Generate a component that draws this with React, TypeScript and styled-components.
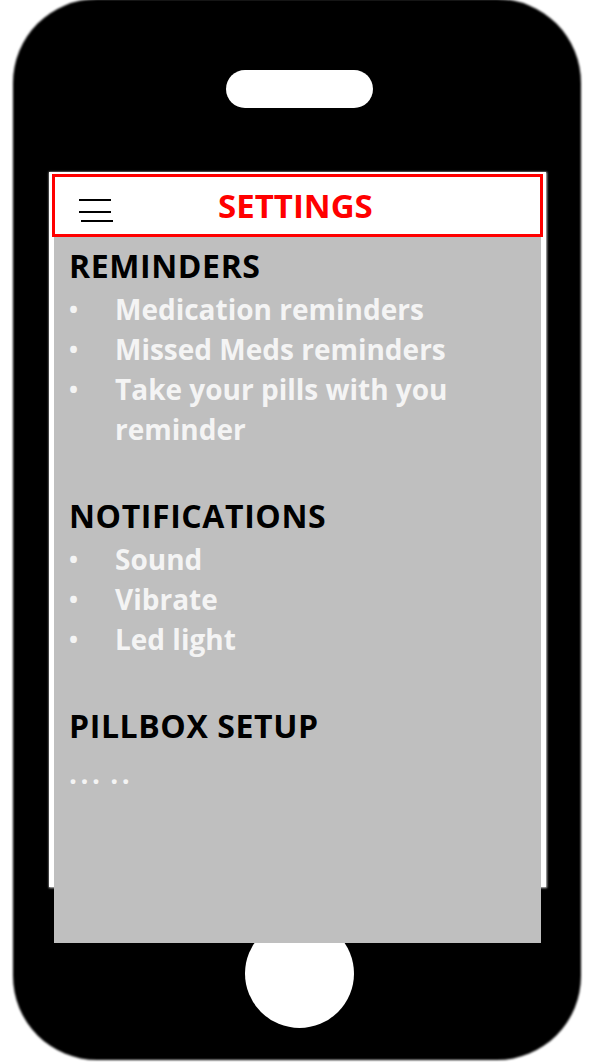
import React from "react";
import styled, { createGlobalStyle } from "styled-components";

const Global = createGlobalStyle`
  html, body { margin: 0; padding: 0; background: #ffffff; }
  body { width: 593px; height: 1062px; overflow: hidden; font-family: "Open Sans", "Liberation Sans", sans-serif; }
`;

const Page = styled.div`
  width: 593px;
  height: 1062px;
  display: flex;
  padding-left: 13px;
  box-sizing: border-box;
`;

const Phone = styled.div`
  position: relative;
  width: 568px;
  height: 1061px;
  margin-top: -1px;
  display: flex;
  flex-direction: column;
  align-items: center;
  isolation: isolate;
  &::before {
    content: "";
    position: absolute;
    inset: 0;
    background: #000;
    border-radius: 84px;
    filter: blur(1.2px);
    z-index: -1;
  }
`;

const Speaker = styled.div`
  width: 147px;
  height: 38px;
  margin-top: 71px;
  margin-left: 5px;
  border-radius: 19px;
  background: #fff;
  filter: blur(0.6px);
  flex-shrink: 0;
`;

const Screen = styled.div`
  position: relative;
  z-index: 1;
  width: 497px;
  height: 715px;
  margin-top: 64px;
  margin-left: 1px;
  background: #fff;
  display: flex;
  flex-direction: column;
  align-items: center;
  box-shadow: 0 0 2px 0.5px rgba(255, 255, 255, 0.8);
  flex-shrink: 0;
`;

const Header = styled.header`
  box-sizing: border-box;
  width: 491px;
  height: 63px;
  margin-top: 2px;
  border: 3px solid #ff0000;
  background: #fff;
  display: flex;
  align-items: center;
  flex-shrink: 0;
`;

const Burger = styled.div`
  display: flex;
  flex-direction: column;
  align-self: flex-start;
  margin-left: 24px;
  margin-top: 22px;
  width: 34px;
`;

const BurgerLine = styled.span<{ $shift?: number; $gap?: number }>`
  display: block;
  width: 32px;
  height: 2px;
  background: #000;
  margin-left: ${(p) => p.$shift ?? 0}px;
  margin-top: ${(p) => p.$gap ?? 0}px;
`;

const Title = styled.h1`
  margin: 0 0 0 105px;
  font-family: "Open Sans", "Liberation Sans", sans-serif;
  font-weight: 700;
  font-size: 33px;
  line-height: 40px;
  color: #ff0000;
`;

const Panel = styled.main`
  box-sizing: border-box;
  width: 487px;
  height: 706px;
  background: #bfbfbf;
  padding: 5px 0 0 15px;
  flex-shrink: 0;
`;

const Section = styled.section`
  margin-bottom: 43px;
`;

const Heading = styled.h2`
  margin: 0;
  font-family: "Open Sans", "Liberation Sans", sans-serif;
  font-weight: 700;
  font-size: 32px;
  letter-spacing: 0.6px;
  line-height: 47px;
  color: #000;
`;

const List = styled.ul`
  margin: 0;
  padding: 0;
  list-style: none;
`;

const Item = styled.li`
  display: flex;
  font-family: "Open Sans", "Liberation Sans", sans-serif;
  font-weight: 700;
  font-size: 28px;
  line-height: 40px;
  color: #f4f4f4;
  &::before {
    content: "•";
    width: 46px;
    flex-shrink: 0;
    font-size: 24px;
  }
`;

const Dots = styled.div`
  padding-top: 4px;
  font-family: "Open Sans", "Liberation Sans", sans-serif;
  font-weight: 700;
  font-size: 28px;
  line-height: 40px;
  letter-spacing: 3.5px;
  word-spacing: -4px;
  color: #f4f4f4;
`;

const HomeButton = styled.div`
  width: 109px;
  height: 109px;
  border-radius: 50%;
  background: #fff;
  margin-top: 32px;
  margin-left: 5px;
  filter: blur(0.6px);
  flex-shrink: 0;
`;

export default function App() {
  return (
    <Page>
      <Global />
      <Phone>
        <Speaker />
        <Screen>
          <Header>
            <Burger>
              <BurgerLine />
              <BurgerLine $gap={10} />
              <BurgerLine $gap={7} $shift={2} />
            </Burger>
            <Title>SETTINGS</Title>
          </Header>
          <Panel>
            <Section>
              <Heading>REMINDERS</Heading>
              <List>
                <Item>Medication reminders</Item>
                <Item>Missed Meds reminders</Item>
                <Item>Take your pills with you reminder</Item>
              </List>
            </Section>
            <Section>
              <Heading>NOTIFICATIONS</Heading>
              <List>
                <Item>Sound</Item>
                <Item>Vibrate</Item>
                <Item>Led light</Item>
              </List>
            </Section>
            <Section>
              <Heading>PILLBOX SETUP</Heading>
              <Dots>... ..</Dots>
            </Section>
          </Panel>
        </Screen>
        <HomeButton />
      </Phone>
    </Page>
  );
}
